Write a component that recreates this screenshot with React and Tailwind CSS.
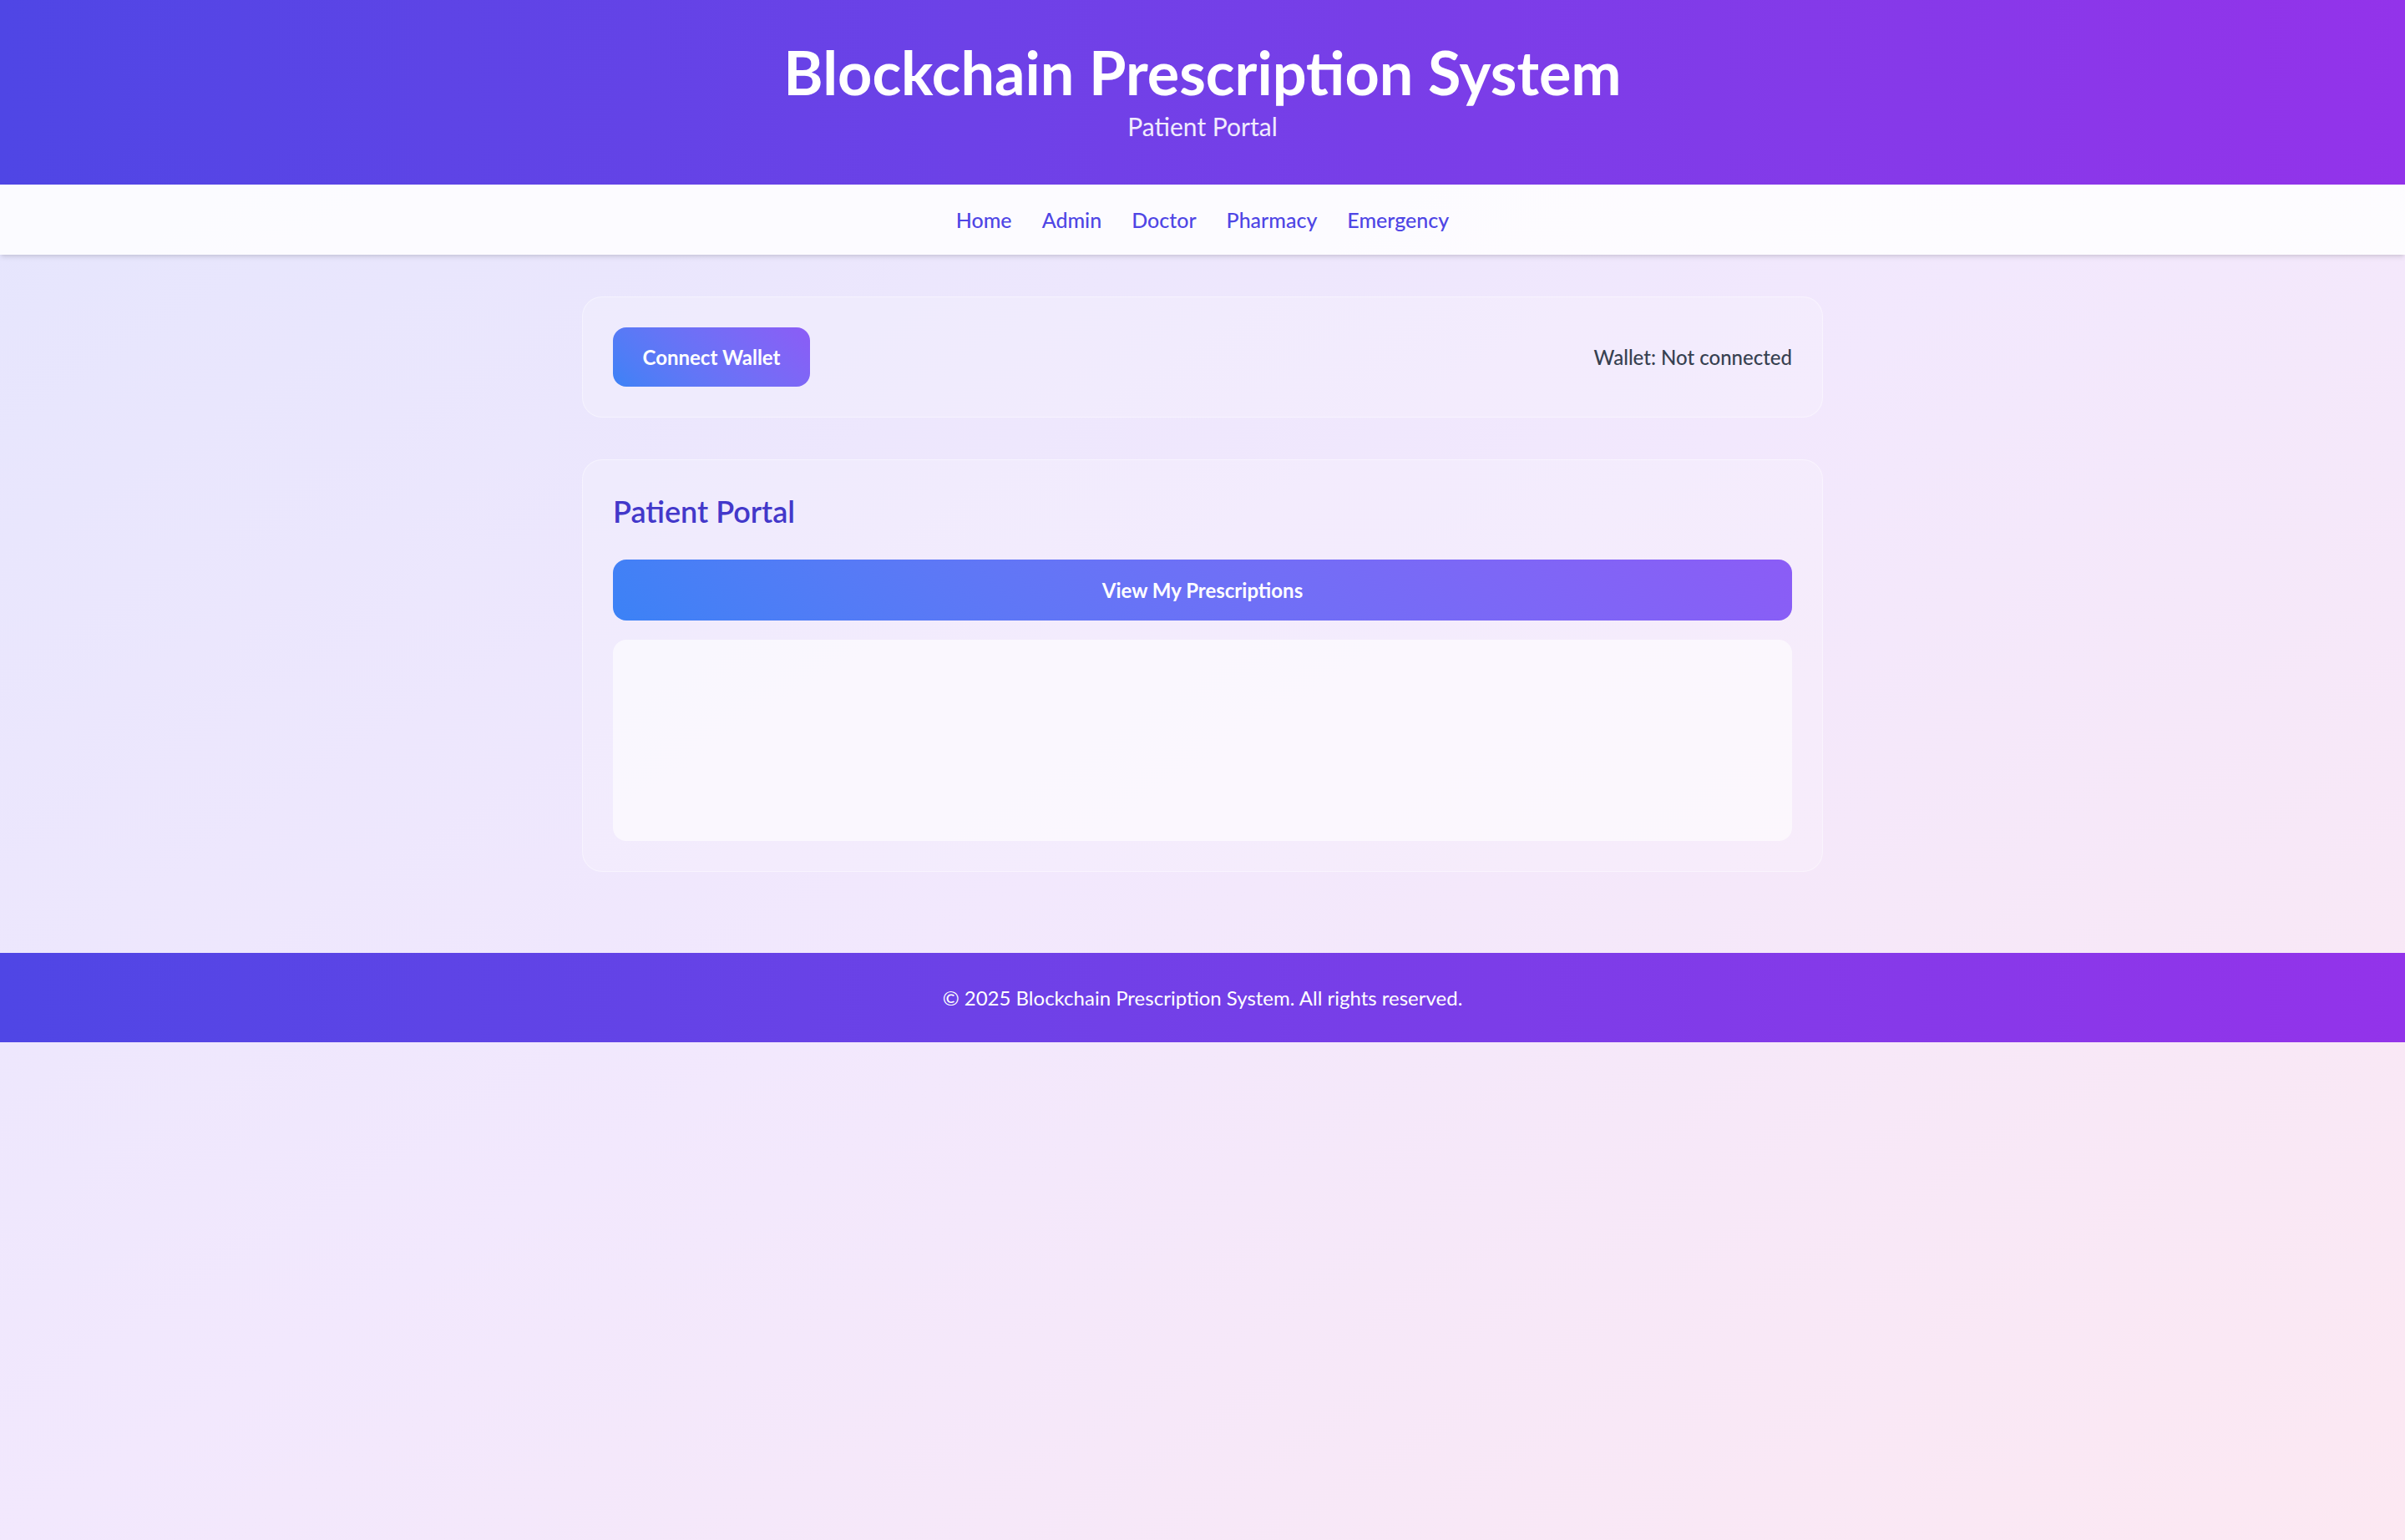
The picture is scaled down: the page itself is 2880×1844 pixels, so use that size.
import React from "react";

const NAV = ["Home", "Admin", "Doctor", "Pharmacy", "Emergency"];

export default function App() {
  return (
    <div className="min-h-screen bg-gradient-to-br from-[#e4e5fd] via-[#f2e8fd] to-[#fce8f2] font-['Lato',sans-serif]">
      {/* header */}
      <header className="bg-gradient-to-r from-[#4f46e5] to-[#9333ea] text-white text-center pt-[46px] pb-[50px]">
        <h1 className="text-[72px] leading-[80px] font-bold">
          Blockchain Prescription System
        </h1>
        <p className="mt-[5px] text-[30px] leading-[40px] text-white/90">Patient Portal</p>
      </header>

      {/* nav */}
      <nav className="bg-white/85 shadow-md py-[24px]">
        <ul className="flex justify-center gap-[36px]">
          {NAV.map((n) => (
            <li key={n}>
              <a href="#" className="text-[25px] leading-[36px] font-medium text-[#4f46e5]">
                {n}
              </a>
            </li>
          ))}
        </ul>
      </nav>

      <main className="w-[1486px] mx-auto pt-[50px] pb-[97px] flex flex-col gap-[50px]">
        {/* wallet card */}
        <div className="bg-white/20 border border-white/40 rounded-[24px] p-[36px] flex items-center justify-between">
          <button className="w-[236px] h-[71px] rounded-[16px] bg-linear-45 from-[#3b82f6] to-[#8b5cf6] text-white text-[24px] font-bold">
            Connect Wallet
          </button>
          <span className="text-[24px] font-medium text-[#374151]">Wallet: Not connected</span>
        </div>

        {/* patient card */}
        <div className="bg-white/20 border border-white/40 rounded-[24px] p-[36px]">
          <h2 className="text-[36px] leading-[50px] font-semibold text-[#4338ca]">Patient Portal</h2>
          <button className="mt-[33px] w-full h-[73px] rounded-[16px] bg-linear-45 from-[#3b82f6] to-[#8b5cf6] text-white text-[24px] font-bold">
            View My Prescriptions
          </button>
          <div className="mt-[23px] h-[241px] rounded-[16px] bg-white/60"></div>
        </div>
      </main>

      {/* footer */}
      <footer className="bg-gradient-to-r from-[#4f46e5] to-[#9333ea] text-white text-center pt-[38px] pb-[37px]">
        <p className="text-[24px] leading-[32px]">© 2025 Blockchain Prescription System. All rights reserved.</p>
      </footer>
    </div>
  );
}
